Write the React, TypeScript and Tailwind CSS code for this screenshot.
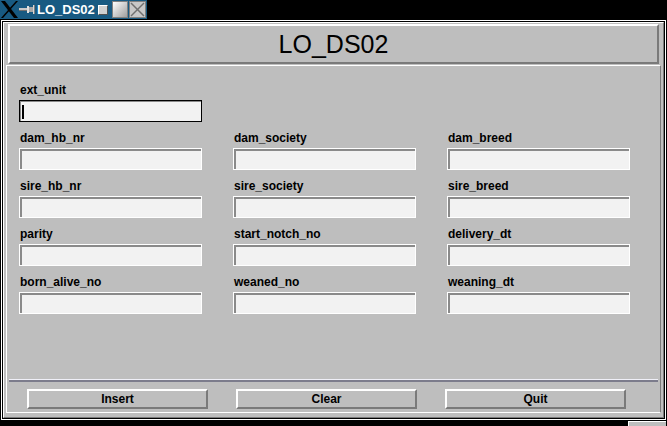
import React from "react";

const font = { fontFamily: '"Liberation Sans", Arial, sans-serif' };

function Field({ label, focused }: { label: string; focused?: boolean }) {
  return (
    <div className="flex flex-col w-[183px]">
      <div className="h-[14px] leading-[14px] text-[12px] font-bold text-black pl-[1px]">{label}</div>
      <div className="mt-[3px] h-[22px]">
        {focused ? (
          <div className="h-full border border-black">
            <div className="h-full border-t border-l border-[#8a8a8a] bg-[#f2f2f2] relative">
              <div className="absolute left-[1px] top-[3px] w-[2px] h-[14px] bg-black" />
            </div>
          </div>
        ) : (
          <div className="h-full border border-white">
            <div className="h-full border-t-2 border-l-2 border-[#8a8a8a] bg-[#f2f2f2]" />
          </div>
        )}
      </div>
    </div>
  );
}

function Btn({ label }: { label: string }) {
  return (
    <div className="w-[181px] h-[20px] border-2 border-t-white border-l-white border-b-[#7a7a7a] border-r-[#7a7a7a] bg-[#bebebe] flex items-center justify-center text-[12px] font-bold text-black">
      {label}
    </div>
  );
}

export default function App() {
  const rows: string[][] = [
    ["dam_hb_nr", "dam_society", "dam_breed"],
    ["sire_hb_nr", "sire_society", "sire_breed"],
    ["parity", "start_notch_no", "delivery_dt"],
    ["born_alive_no", "weaned_no", "weaning_dt"],
  ];
  return (
    <div className="w-[667px] h-[426px] bg-black relative overflow-hidden" style={font}>
      {/* title bar */}
      <div className="h-[19px] w-[147px] bg-[#185a82] relative flex items-center">
        <svg className="absolute left-[1px] top-[1px]" width="17" height="17" viewBox="0 0 17 17">
          <polygon points="0,0 4,0 17,17 13,17" fill="#000" />
          <polygon points="15,0 17,0 2,17 0,17" fill="#000" />
        </svg>
        <svg className="absolute left-[19px] top-[5px]" width="16" height="9" viewBox="0 0 16 9">
          <rect x="0" y="3" width="8" height="2" fill="#c8c8c8" />
          <rect x="0" y="5" width="8" height="1" fill="#707070" />
          <rect x="8" y="1" width="2" height="7" fill="#e0e0e0" />
          <rect x="10" y="2" width="4" height="5" fill="#a8a8a8" />
          <rect x="14" y="0" width="2" height="9" fill="#d8d8d8" />
          <rect x="15" y="0" width="1" height="9" fill="#808080" />
        </svg>
        <span className="absolute left-[37px] top-[1px] text-white font-bold text-[13px] leading-[17px]">LO_DS02</span>
        <div className="absolute left-[98px] top-[5px] w-[10px] h-[10px] border border-[#505050] bg-[#d0d0d0] border-t-white border-l-white" />
        <div className="absolute left-[112px] top-[1px] w-[16px] h-[17px] bg-gradient-to-br from-white to-[#a0a0a0] border border-[#808080]" />
        <div className="absolute left-[129px] top-[1px] w-[17px] h-[17px] bg-[#c8c8c8] border border-[#808080]">
          <svg width="15" height="15" viewBox="0 0 15 15" className="absolute left-0 top-0">
            <line x1="1" y1="1" x2="14" y2="14" stroke="#707070" strokeWidth="1.5" />
            <line x1="14" y1="1" x2="1" y2="14" stroke="#707070" strokeWidth="1.5" />
          </svg>
        </div>
      </div>

      {/* window */}
      <div className="w-[667px] h-[402px] border border-black">
        <div className="h-full border border-white">
          <div className="h-full border border-black">
            <div className="h-full border border-t-white border-l-white border-b-[#7a7a7a] border-r-[#7a7a7a] bg-[#bebebe] px-[2px] pt-[1px] pb-[4px] flex flex-col">
              {/* header */}
              <div className="mx-[2px] h-[40px] border-2 border-t-white border-l-white border-b-[#7a7a7a] border-r-[#7a7a7a] flex items-center justify-center">
                <span className="text-[25px] leading-none text-black">LO_DS02</span>
              </div>
              {/* body */}
              <div className="flex-1 mt-[1px] border border-t-white border-l-white border-b-white border-r-[#7a7a7a] flex flex-col">
                <div className="flex-1 mx-[2px] mt-[1px] border-b border-b-[#f0f0f8] flex flex-col pl-[10px] pt-[16px]">
                  <Field label="ext_unit" focused />
                  {rows.map((r) => (
                    <div key={r[0]} className="flex gap-[31px] mt-[9px]">
                      {r.map((l) => (
                        <Field key={l} label={l} />
                      ))}
                    </div>
                  ))}
                </div>
                <div className="h-[2px] mx-[2px] bg-[#7c7c8c]" />
                <div className="h-[30px] flex items-start pt-[7px] pl-[20px] gap-[28px]">
                  <Btn label="Insert" />
                  <Btn label="Clear" />
                  <Btn label="Quit" />
                </div>
              </div>
            </div>
          </div>
        </div>
      </div>
      <div className="absolute left-[628px] top-[421px] w-[38px] h-[5px] bg-[#bebebe] border-t border-l border-white" />
    </div>
  );
}
